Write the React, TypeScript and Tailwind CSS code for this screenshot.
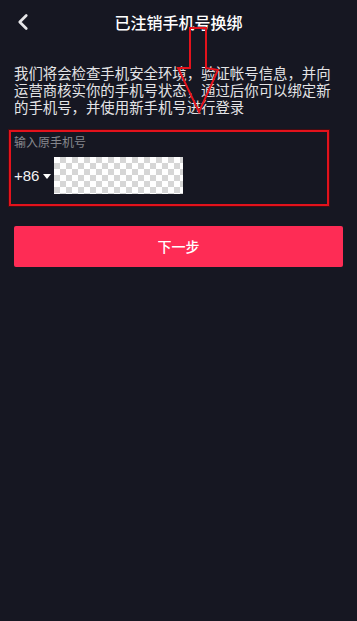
import { ChevronLeft } from 'lucide-react';

export default function App() {
  return (
    <div
      className="relative w-[357px] h-[621px] bg-[#161722] overflow-hidden text-white"
      style={{ fontFamily: '"Noto Sans CJK SC", "Liberation Sans", sans-serif' }}
    >
      {/* header */}
      <div className="relative h-[44px] flex items-center justify-center">
        <button className="absolute left-[10px] top-[9px] text-[#e6e6e8]">
          <ChevronLeft className="h-[26px] w-[26px]" strokeWidth={2.5} />
        </button>
        <h1 className="text-[16px] font-medium leading-none">已注销手机号换绑</h1>
      </div>

      <p className="mt-[20px] px-[14px] text-[14.4px] leading-[17px] text-[#e4e4e6]">
        我们将会检查手机安全环境，验证帐号信息，并向运营商核实你的手机号状态，通过后你可以绑定新的手机号，并使用新手机号进行登录
      </p>

      {/* input area (annotated) */}
      <div className="mt-[15px] ml-[9px] w-[320px] h-[76px] border-2 border-[#e3121c] shadow-[0_0_0_1px_rgba(120,0,0,0.5)]">
        <div className="pl-[3px] pt-[2px] text-[12px] leading-[16px] text-[#86878d]">输入原手机号</div>
        <div className="mt-[7px] flex items-center pl-[3px]">
          <span className="text-[15px] leading-none text-[#f2f2f2]" style={{ fontFamily: '"Liberation Sans", sans-serif' }}>+86</span>
          <span className="ml-[4px] mt-[2px] w-0 h-0 border-l-[4px] border-r-[4px] border-t-[5px] border-l-transparent border-r-transparent border-t-white" />
          <div className="ml-[3px] w-[129px] h-[37px] bg-[repeating-conic-gradient(#d6d6d6_0_25%,#ffffff_0_50%)] bg-[length:12px_12px]" />
        </div>
      </div>

      <button className="mt-[20px] ml-[14px] w-[329px] h-[41px] rounded-[2px] bg-[#fe2c55] text-[14px] font-medium text-white">
        下一步
      </button>

      {/* annotation arrow */}
      <svg className="absolute left-[172px] top-[24px]" width="52" height="92" viewBox="0 0 52 92">
        <polygon
          points="18,4 34,4 34,44 46,46 27,88 6,44 18,44"
          fill="none"
          stroke="#e3121c"
          strokeWidth="2"
          strokeLinejoin="miter"
        />
      </svg>
    </div>
  );
}
